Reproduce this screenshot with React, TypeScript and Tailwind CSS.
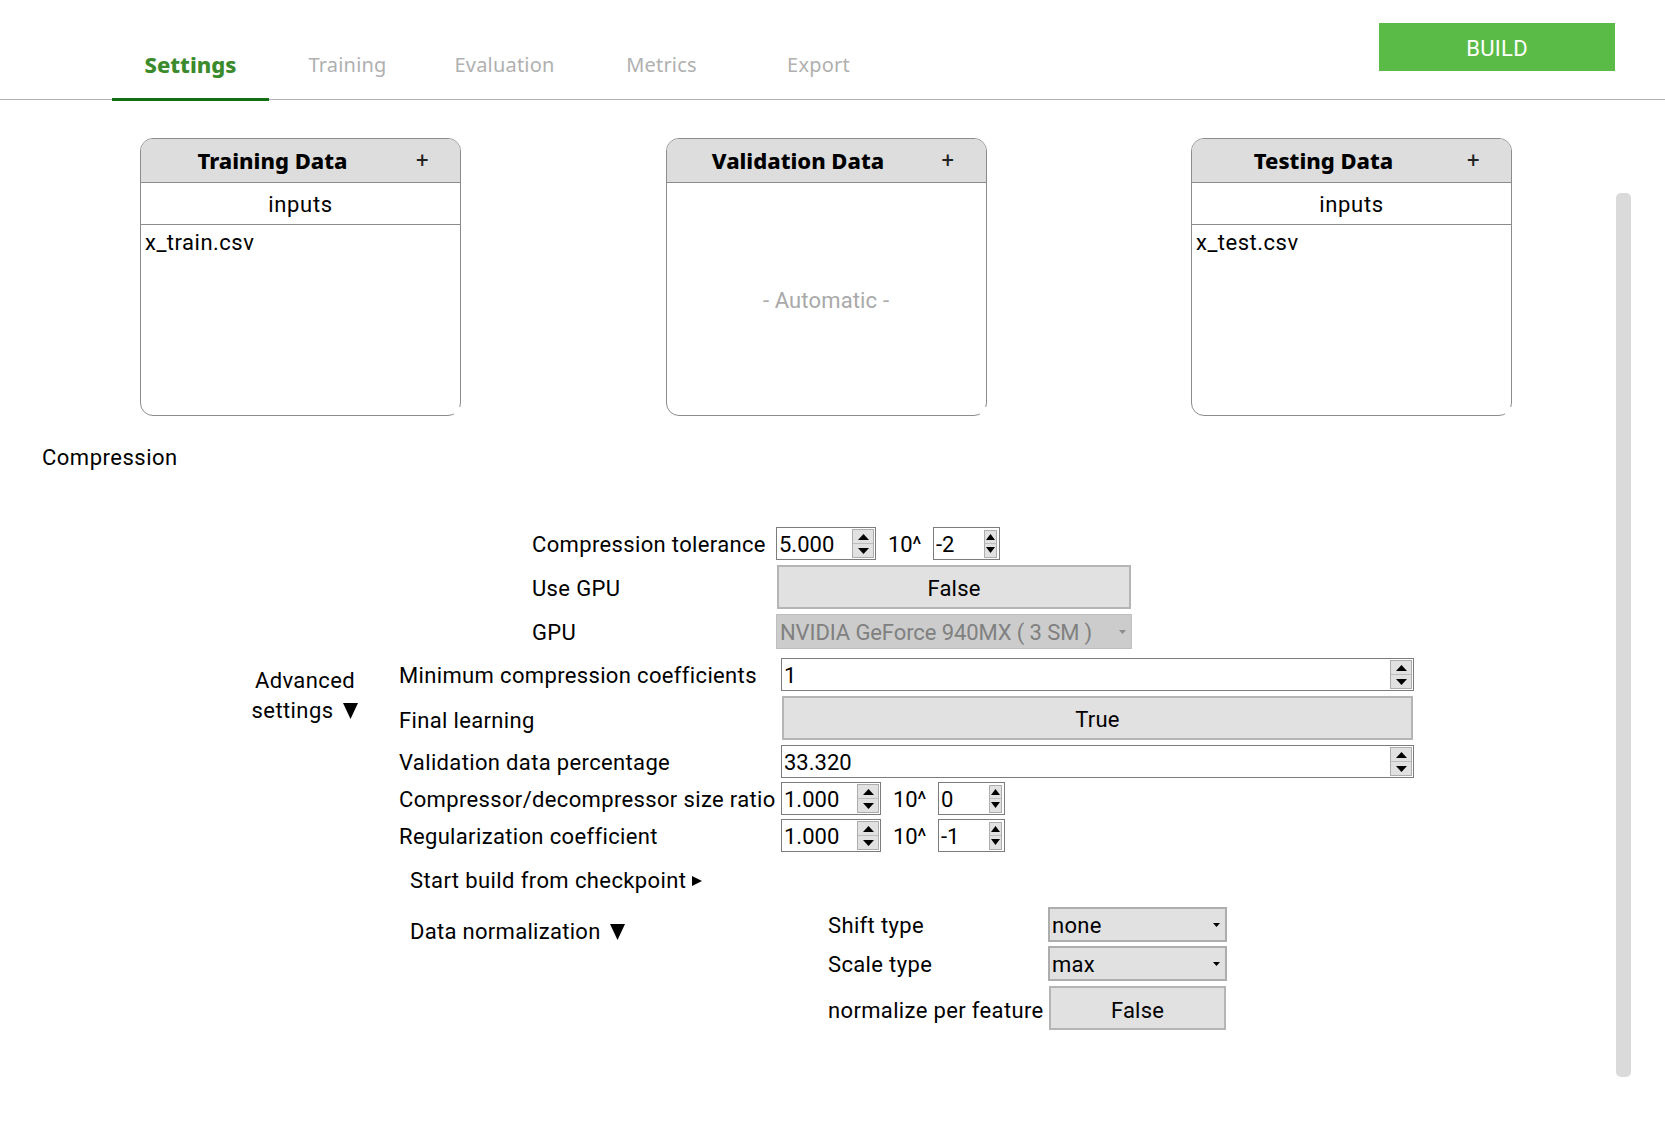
import React from "react";

function Tri({ dir, w, h, color = "#000" }: { dir: "up" | "down" | "right"; w: number; h: number; color?: string }) {
  const pts = dir === "up" ? `0,${h} ${w},${h} ${w / 2},0` : dir === "down" ? `0,0 ${w},0 ${w / 2},${h}` : `0,0 ${w},${h / 2} 0,${h}`;
  return (
    <svg width={w} height={h} viewBox={`0 0 ${w} ${h}`} className="block shrink-0">
      <polygon points={pts} fill={color} />
    </svg>
  );
}

function SpinArrows({ narrow }: { narrow?: boolean }) {
  return (
    <div className={narrow ? "flex flex-col w-[13px] h-[28px] mr-[2px] bg-[#e1e1e1] border border-[#adadad]" : "flex flex-col w-[22px] h-[29px] mr-[1px] bg-[#e1e1e1] border border-[#adadad]"}>
      <div className="flex-1 flex items-center justify-center border-b border-[#bdbdbd]">
        <Tri dir="up" w={narrow ? 9 : 11} h={6} />
      </div>
      <div className="flex-1 flex items-center justify-center">
        <Tri dir="down" w={narrow ? 9 : 11} h={6} />
      </div>
    </div>
  );
}

function Spin({ value, className, narrow }: { value: string; className: string; narrow?: boolean }) {
  return (
    <div className={`h-[33px] border border-[#7c7c7c] bg-white flex items-center justify-between pl-[2px] text-[22px] leading-[28px] text-black ${className}`}>
      <span className="pt-[3px]">{value}</span>
      <SpinArrows narrow={narrow} />
    </div>
  );
}

function Power({ value, className }: { value: string; className: string }) {
  return (
    <>
      <span className="ml-[12px] pt-[2px] w-[45px] text-[22px] leading-[28px] tracking-[-0.2px] text-black">10^</span>
      <Spin value={value} className={className} narrow />
    </>
  );
}

function Toggle({ label, className }: { label: string; className: string }) {
  return (
    <div className={`h-[44px] border-2 border-[#b5b5b5] bg-[#e1e1e1] flex items-center justify-center text-[22px] tracking-[0.2px] text-black ${className}`}>
      {label}
    </div>
  );
}

function Select({ value }: { value: string }) {
  return (
    <div className="h-[35px] w-[179px] border-2 border-[#adadad] bg-[#e1e1e1] flex items-center justify-between pl-[2px] pr-[5px] text-[22px] leading-[28px] tracking-[0.3px] text-black">
      <span className="pt-[3px]">{value}</span>
      <Tri dir="down" w={7} h={4} />
    </div>
  );
}

function Card({ title, children }: { title: string; children: React.ReactNode }) {
  return (
    <div className="relative w-[321px] h-[278px] rounded-[13px] border border-[#8c8c8c] bg-white flex flex-col">
      <div className="h-[44px] shrink-0 rounded-t-[12px] bg-[#dddddd] border-b border-[#8c8c8c] flex items-center relative">
        <span className="w-[263px] text-center font-['Noto_Sans'] font-extrabold text-[22px] text-black">{title}</span>
        <span className="absolute left-[275px] top-[8px] text-[22px] leading-[28px] text-[#222]">+</span>
      </div>
      {children}
      <div className="absolute -right-px -bottom-px w-[7px] h-[9px] bg-white" />
    </div>
  );
}

function InputsList({ file }: { file: string }) {
  return (
    <>
      <div className="h-[42px] shrink-0 border-b border-[#8c8c8c] flex items-center justify-center pt-[1px] text-[22px] tracking-[0.7px] text-black">inputs</div>
      <div className="pl-[4px] pt-[3px] text-[22px] leading-[30px] tracking-[0.5px] text-black">{file}</div>
    </>
  );
}

const tabs = ["Settings", "Training", "Evaluation", "Metrics", "Export"];
const label = "leading-[28px] tracking-[0.35px] whitespace-nowrap";

export default function App() {
  return (
    <div className="relative w-[1665px] h-[1123px] overflow-hidden bg-white font-['Roboto',sans-serif] text-black">
      <header className="h-[100px] border-b border-[#b3b3b3] flex justify-between pl-[112px] pr-[50px]">
        <nav className="flex">
          {tabs.map((t, i) => (
            <div
              key={t}
              className={
                i === 0
                  ? "w-[157px] h-[101px] pt-[49px] border-b-[3px] border-[#136f13] text-center font-['Noto_Sans'] font-extrabold text-[22px] leading-[30px] text-[#3b8a2c]"
                  : "w-[157px] h-[101px] pt-[50px] text-center font-['Noto_Sans'] text-[20px] leading-[30px] tracking-[0.2px] text-[#b0b0b0]"
              }
            >
              {t}
            </div>
          ))}
        </nav>
        <button className="mt-[23px] w-[236px] h-[48px] pt-[2px] bg-[#5abb46] text-white text-[22px] tracking-[0.3px]">BUILD</button>
      </header>

      <section className="mt-[38px] pl-[140px] flex gap-[204.5px]">
        <Card title="Training Data">
          <InputsList file="x_train.csv" />
        </Card>
        <Card title="Validation Data">
          <div className="flex-1 flex items-center justify-center pt-[2px] text-[22px] tracking-[0.15px] text-[#a9a9a9]">- Automatic -</div>
        </Card>
        <Card title="Testing Data">
          <InputsList file="x_test.csv" />
        </Card>
      </section>

      <div className="mt-[28px] pl-[42px] text-[22px] leading-[28px] tracking-[0.5px]">Compression</div>

      <section className="mt-[55px] text-[22px]">
        <div className="pl-[532px] flex flex-col gap-[5px]">
          <div className="flex items-center">
            <span className={`w-[244px] pt-[2px] ${label}`}>Compression tolerance</span>
            <Spin value="5.000" className="w-[100px]" />
            <Power value="-2" className="w-[67px]" />
          </div>
          <div className="flex items-center">
            <span className={`w-[245px] pt-[4px] ${label}`}>Use GPU</span>
            <Toggle label="False" className="w-[354px] pt-[3px]" />
          </div>
          <div className="flex items-center">
            <span className={`w-[244px] pt-[3px] ${label}`}>GPU</span>
            <div className="h-[35px] w-[356px] border border-[#bfbfbf] bg-[#cccccc] flex items-center justify-between pl-[3px] pr-[5px] leading-[28px] text-[#808080]">
              <span className="pt-[3px] tracking-[-0.1px]">NVIDIA GeForce 940MX ( 3 SM )</span>
              <Tri dir="down" w={7} h={4} color="#8c8c8c" />
            </div>
          </div>
        </div>

        <div className="mt-[9px] pl-[240px] flex">
          <div className="w-[160px] shrink-0 pt-[8px]">
            <div className="-ml-[2px] w-[134px] text-center leading-[30px] tracking-[0.4px]">
              Advanced
              <br />
              <span className="inline-flex items-center gap-[10px]">
                settings <Tri dir="down" w={15} h={16} />
              </span>
            </div>
          </div>
          <div className="flex flex-col">
            <div className="flex items-center">
              <span className={`-ml-px w-[382px] pt-[2px] ${label}`}>Minimum compression coefficients</span>
              <Spin value="1" className="w-[633px]" />
            </div>
            <div className="flex items-center mt-[5px]">
              <span className={`-ml-px w-[383px] pt-[6px] ${label}`}>Final learning</span>
              <Toggle label="True" className="w-[631px] pt-[3px]" />
            </div>
            <div className="flex items-center mt-[5px]">
              <span className={`-ml-px w-[382px] pt-[2px] ${label}`}>Validation data percentage</span>
              <Spin value="33.320" className="w-[633px]" />
            </div>
            <div className="flex items-center mt-[4px]">
              <span className={`-ml-px w-[382px] pt-[2px] ${label}`}>Compressor/decompressor size ratio</span>
              <Spin value="1.000" className="w-[100px]" />
              <Power value="0" className="w-[67px]" />
            </div>
            <div className="flex items-center mt-[4px]">
              <span className={`-ml-px w-[382px] pt-[2px] ${label}`}>Regularization coefficient</span>
              <Spin value="1.000" className="w-[100px]" />
              <Power value="-1" className="w-[67px]" />
            </div>
            <div className="mt-[14px] pl-[10px] h-[28px] pt-[2px] leading-[28px] tracking-[0.4px] flex items-center gap-[6px]">
              <span>Start build from checkpoint</span>
              <Tri dir="right" w={10} h={10} />
            </div>
            <div className="mt-[13px] flex">
              <div className="w-[429px] shrink-0 pl-[10px] pt-[11px] leading-[28px] tracking-[0.3px]">
                <span className="inline-flex items-center gap-[9px]">
                  Data normalization <Tri dir="down" w={15} h={16} />
                </span>
              </div>
              <div className="flex flex-col">
                <div className="flex items-center">
                  <span className={`-ml-px w-[220px] pt-[3px] ${label}`}>Shift type</span>
                  <Select value="none" />
                </div>
                <div className="flex items-center mt-[4px]">
                  <span className={`-ml-px w-[220px] pt-[3px] ${label}`}>Scale type</span>
                  <Select value="max" />
                </div>
                <div className="flex items-center mt-[5px]">
                  <span className={`-ml-px w-[221px] pt-[6px] ${label}`}>normalize per feature</span>
                  <Toggle label="False" className="w-[177px] pt-[5px]" />
                </div>
              </div>
            </div>
          </div>
        </div>
      </section>

      <div className="absolute left-[1616px] top-[193px] w-[15px] h-[884px] rounded-[5px] bg-[#dadada]" />
    </div>
  );
}
